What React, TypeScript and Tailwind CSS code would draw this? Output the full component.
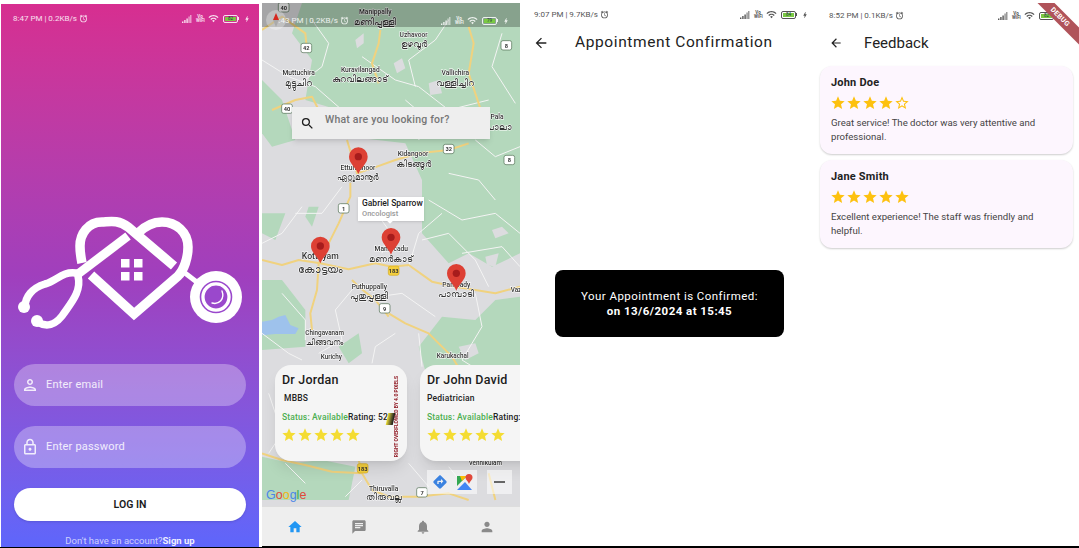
import { FC } from 'react';
import {
  MdArrowBack,
  MdBolt,
  MdChat,
  MdDirections,
  MdHome,
  MdNotifications,
  MdOutlineAlarm,
  MdOutlineLock,
  MdOutlinePerson,
  MdPerson,
  MdSearch,
  MdStar,
  MdStarBorder,
  MdWifi,
} from 'react-icons/md';

interface StatusBarProps {
  time: string;
  battery: string;
  light?: boolean;
  className?: string;
}

const StatusBar: FC<StatusBarProps> = ({ time, battery, light, className }) => {
  const tone = light ? 'text-white/85' : 'text-[#555]';
  return (
    <div className={`flex items-center justify-between text-[8px] leading-none font-['Roboto',sans-serif] ${tone} ${className}`}>
      <div className="flex items-center gap-[2px]">
        <span>{time}</span>
        <MdOutlineAlarm className="w-[9px] h-[9px]" />
      </div>
      <div className="flex items-center gap-[4px]">
        <svg width="10" height="8" viewBox="0 0 10 8" fill="currentColor">
          <path d="M0 8V6.5h1.4V8zM2.2 8V5h1.4v3zM4.4 8V3.5h1.4V8zM6.6 8V1.5h.9V8zM8.4 8V0h.9v8z" />
        </svg>
        <span className="text-[4.5px] leading-[4px] font-bold w-[8px] text-center">Vo WiFi</span>
        <MdWifi className="w-[11px] h-[11px]" />
        <div className="flex items-center">
          <div className="w-[15px] h-[8px] rounded-[2px] border border-current p-[1px] flex">
            <div className="w-full bg-[#7ac943] text-[4.5px] leading-[4px] text-center text-[#234]">{battery}</div>
          </div>
          <div className="w-[1px] h-[3px] bg-current" />
        </div>
        <MdBolt className="w-[8px] h-[8px]" />
      </div>
    </div>
  );
};

const Logo: FC = () => (
  <svg width="258" height="150" viewBox="1 190 258 150" fill="none" stroke="white" strokeLinecap="butt">
    <path strokeWidth="9.5" d="M174 266 L128 227 C118 219 108 222 102 222 C88 222 80 234 80 246 C80 253 81 258 82 263" />
    <path strokeWidth="9.5" d="M91 275 L134 314 L178 276 C184 270 188 258 188 247 C188 232 176 222 162 222 C152 222 144 227 138 233" />
    <path strokeWidth="9" d="M128 236 L78 274" />
    <path strokeWidth="7.5" strokeLinecap="round" d="M76 273 C62 271 57 281 45 284 C32 288 25 297 25 307" />
    <path strokeWidth="7.5" strokeLinecap="round" d="M78 276 C82 292 70 304 62 316 C54 326 46 327 37 322" />
    <circle cx="24" cy="307" r="6" fill="white" stroke="none" />
    <circle cx="37" cy="321" r="6" fill="white" stroke="none" />
    <path strokeWidth="5" d="M185 273 L198 283" />
    <circle cx="216" cy="297" r="26" fill="white" stroke="none" />
    <circle cx="216" cy="297" r="15.5" fill="none" stroke="#9a48cc" strokeWidth="1.6" />
    <circle cx="216" cy="297" r="12" fill="#9a48cc" stroke="white" strokeWidth="1.2" />
    <path strokeWidth="1.4" d="M222 291 C225 299 219 305 212 303" strokeLinecap="round" />
    <g fill="white" stroke="none">
      <rect x="121" y="259" width="8.5" height="8.5" />
      <rect x="134" y="259" width="8.5" height="8.5" />
      <rect x="121" y="272" width="8.5" height="8.5" />
      <rect x="134" y="272" width="8.5" height="8.5" />
    </g>
  </svg>
);

const LoginPanel: FC = () => (
  <div className="ml-px mt-1 w-[258px] h-[543px] flex flex-col items-center bg-gradient-to-b from-[#d72e90] via-[#a03fbd] to-[#5e66fb] font-['Roboto',sans-serif]">
    <StatusBar time="8:47 PM | 0.2KB/s" battery="82" light className="w-full pl-3 pr-2 pt-[9px]" />
    <div className="mt-[166px]">
      <Logo />
    </div>
    <div className="w-[232px] mt-[24px] flex flex-col">
      <div className="h-[42px] rounded-[21px] bg-white/30 flex items-center pl-[7px] text-white/85 text-[11px] tracking-[0.2px]">
        <MdOutlinePerson className="w-[18px] h-[18px]" />
        <span className="ml-[7px]">Enter email</span>
      </div>
      <div className="h-[42px] mt-[20px] rounded-[21px] bg-white/30 flex items-center pl-[7px] text-white/85 text-[11px] tracking-[0.2px]">
        <MdOutlineLock className="w-[18px] h-[18px]" />
        <span className="ml-[7px]">Enter password</span>
      </div>
      <div className="h-[33px] mt-[20px] rounded-[17px] bg-white shadow-sm flex items-center justify-center text-[#1b1b1b] text-[10.5px] font-semibold">
        LOG IN
      </div>
    </div>
    <div className="mt-[13px] text-[9.5px] text-white/70">
      Don't have an account?<span className="font-bold text-white/90">Sign up</span>
    </div>
  </div>
);

const roads = [
  'M0 780 L60 795 L110 780 L175 790 L260 808 L340 790 L390 800 L440 795 L510 845 L580 860 L700 880 L774 860',
  'M265 540 L265 590 L230 670 L200 730 L170 790 L165 870 L145 940 L150 990',
  'M380 940 L430 970 L500 1000 L570 1070 L600 1120',
  'M270 840 L290 860 L340 900 L380 950',
  'M0 90 L60 50 L130 100 L135 150',
  'M355 90 L350 130 L330 190 L350 250',
  'M620 80 L635 130 L620 220 L640 280 L660 340',
  'M30 330 L100 300 L150 290 L170 330',
  'M255 420 L270 470 L285 520 L330 505 L400 480 L470 460 L560 450 L620 430',
  'M0 1360 L60 1380 L130 1395 L210 1415 L300 1420 L330 1470 L380 1490 L470 1490 L560 1480 L620 1500',
  'M300 1420 L290 1380',
  'M680 1420 L700 1500',
];

const whiteRoads = [
  'M0 180 L80 230 L160 260 L240 330 L300 400',
  'M300 170 L400 240 L470 260 L560 330 L680 300',
  'M500 600 L600 660 L700 640 L774 700',
  'M480 720 L560 700 L640 780 L680 860',
  'M120 620 L60 700 L0 730',
  'M330 620 L380 690 L360 760',
  'M440 800 L470 700 L540 640',
  'M60 880 L130 960 L130 1020',
  'M270 870 L220 930 L240 1020 L170 1060',
  'M400 1000 L340 1040 L330 1090',
  'M470 1000 L480 1100',
  'M640 880 L660 980 L600 1080 L680 1130',
  'M20 1180 L60 1300 L20 1360',
  'M440 1390 L500 1460',
  'M560 60 L520 120 L440 180 L460 260',
  'M720 100 L690 200 L760 310',
  'M0 1000 L80 1060 L120 1080',
  'M150 60 L200 130 L180 200 L90 270',
  'M430 300 L500 360 L470 420',
  'M640 420 L700 470 L774 440',
  'M560 520 L650 540 L700 600',
  'M240 560 L180 640 L100 640',
  'M280 900 L420 880 L520 950',
  'M600 760 L720 740 L774 800',
  'M300 1440 L250 1490',
  'M560 1400 L600 1450',
  'M70 1390 L130 1450',
];

const greens = [
  'M120 9 L774 9 L774 760 L690 800 L620 760 L560 790 L480 700 L480 540 L430 430 L300 415 L230 330 L130 300 L150 180 L90 100 Z',
  'M0 240 L60 300 L100 420 L30 440 L0 400 Z',
  'M470 1040 L540 950 L640 960 L700 900 L774 890 L774 1150 L640 1130 L600 1180 L500 1150 Z',
  'M0 840 L60 840 L130 930 L130 1040 L0 1050 Z',
  'M140 620 L170 620 L150 680 L130 650 Z',
  'M0 1370 L90 1390 L180 1380 L280 1400 L260 1500 L0 1500 Z',
  'M0 640 L70 640 L40 720 L0 700 Z',
  'M230 1040 L290 1000 L300 1060 L260 1090 Z',
];

const grayPatches = [
  'M280 120 L305 100 L305 130 L285 145 Z',
  'M395 190 L420 175 L430 205 L405 220 Z',
  'M690 690 L720 680 L740 700 L700 715 Z',
  'M670 770 L710 760 L700 800 L675 795 Z',
  'M500 250 L530 240 L540 280 L505 285 Z',
  'M590 1040 L640 1030 L650 1060 L610 1080 Z',
];

const shields: [number, number, string, boolean][] = [
  [65, 22, '40', false],
  [75, 326, '40', false],
  [133, 144, '42', false],
  [733, 136, '8', false],
  [742, 480, '8', false],
  [560, 447, '32', false],
  [245, 625, '1', false],
  [395, 812, '183', true],
  [368, 925, '9', false],
  [302, 1405, '183', true],
  [480, 1477, '7', false],
];

const labels: [number, number, string, number?][] = [
  [340, 42, 'Manippally', 20],
  [340, 74, 'മണിപ്പള്ളി', 27],
  [455, 110, 'Uzhavoor', 20],
  [455, 140, 'ഉഴവൂർ', 26],
  [110, 226, 'Muttuchira', 20],
  [110, 258, 'മുട്ടുചിറ', 26],
  [295, 216, 'Kuravilangad', 20],
  [295, 246, 'കുറവിലങ്ങാട്', 26],
  [580, 225, 'Vallichira', 20],
  [580, 257, 'വള്ളിച്ചിറ', 26],
  [705, 358, 'Pala', 20],
  [710, 390, 'പാലാ', 26],
  [453, 468, 'Kidangoor', 20],
  [455, 500, 'കിടങ്ങൂർ', 26],
  [288, 510, 'Ettumanoor', 20],
  [288, 540, 'ഏറ്റുമാനൂർ', 23],
  [175, 778, 'Kottayam', 26],
  [175, 818, 'കോട്ടയം', 32],
  [388, 753, 'Manarcadu', 20],
  [388, 786, 'മണർകാട്', 27],
  [322, 866, 'Puthuppally', 20],
  [322, 898, 'പുതുപ്പള്ളി', 26],
  [583, 860, 'Pampady', 20],
  [583, 890, 'പാമ്പാടി', 26],
  [188, 1006, 'Chingavanam', 19],
  [188, 1036, 'ചിങ്ങവനം', 24],
  [208, 1076, 'Kurichy', 19],
  [572, 1075, 'Karukachal', 19],
  [365, 1472, 'Thiruvalla', 20],
  [365, 1500, 'തിരുവല്ല', 26],
  [670, 1394, 'Vennikulam', 19],
  [762, 875, 'Vaz', 19],
];

const markers: [number, number][] = [
  [289, 470],
  [175, 738],
  [387, 712],
  [583, 820],
];

const MapCanvas: FC = () => (
  <svg className="absolute inset-0 w-full h-full blur-[0.4px]" viewBox="0 9 774 1509" preserveAspectRatio="none">
    <rect x="0" y="9" width="774" height="1509" fill="#dcdcdf" />
    {greens.map((d) => (
      <path key={d} d={d} fill="#b4d8bc" />
    ))}
    {grayPatches.map((d) => (
      <path key={d} d={d} fill="#dcdcdf" />
    ))}
    <path d="M0 965 L30 960 L50 950 L70 945 L85 975 L110 985 L100 1002 L40 1002 L0 1006 Z" fill="#9ec2ec" />
    {whiteRoads.map((d) => (
      <path key={d} d={d} fill="none" stroke="#f4f4f4" strokeWidth="3" strokeLinejoin="round" />
    ))}
    {roads.map((d) => (
      <path key={d} d={d} fill="none" stroke="#f0d27f" strokeWidth="6" strokeLinejoin="round" />
    ))}
    {shields.map(([x, y, text, yellow]) => (
      <g key={`${x}-${y}`}>
        <rect x={x - 16} y={y - 14} width="32" height="28" rx="6" fill={yellow ? '#f4cf3e' : '#fff'} stroke={yellow ? '#d4aa20' : '#4c6b4f'} strokeWidth="2" />
        <text x={x} y={y + 7} textAnchor="middle" fontSize="17" fontWeight="700" fill="#333" fontFamily="Roboto, sans-serif">
          {text}
        </text>
      </g>
    ))}
    {labels.map(([x, y, text, size]) => (
      <text
        key={text}
        x={x}
        y={y}
        textAnchor="middle"
        fontSize={size ?? 20}
        fontWeight="500"
        fill="#333"
        stroke="#fff"
        strokeWidth="3"
        paintOrder="stroke"
        fontFamily="Roboto, 'Noto Sans', sans-serif"
      >
        {text}
      </text>
    ))}
    {markers.map(([x, y]) => (
      <g key={`${x}-${y}`}>
        <path d={`M${x} ${y + 52} C${x - 6} ${y + 34} ${x - 28} ${y + 20} ${x - 28} ${y} A28 28 0 1 1 ${x + 28} ${y} C${x + 28} ${y + 20} ${x + 6} ${y + 34} ${x} ${y + 52} Z`} fill="#dd4034" />
        <circle cx={x} cy={y} r="11" fill="#a71c1c" />
      </g>
    ))}
  </svg>
);

const Stars: FC<{ filled: number; size: string; color: string }> = ({ filled, size, color }) => (
  <div className={`flex ${color}`}>
    {[0, 1, 2, 3, 4].map((i) =>
      i < filled ? <MdStar key={i} className={size} /> : <MdStarBorder key={i} className={size} />
    )}
  </div>
);

const DoctorCard: FC<{ name: string; degree: string; indent?: boolean; left: string; overflowed?: boolean }> = ({
  name,
  degree,
  indent,
  left,
  overflowed,
}) => (
  <div className={`absolute top-[362px] ${left} w-[132px] h-[96px] rounded-[16px] bg-[#f5f5f5] shadow-lg pl-[7px] pt-[7px] overflow-hidden whitespace-nowrap`}>
    <div className="text-[12.5px] leading-[16px] font-medium text-[#1c1c1c] tracking-[0.2px]">{name}</div>
    <div className={`mt-[4px] text-[8.5px] leading-[12px] font-medium text-[#222] tracking-[0.2px] ${indent ? 'ml-[2px]' : ''}`}>{degree}</div>
    <div className="mt-[7px] text-[8.5px] leading-[12px] font-medium tracking-[0.15px] text-[#222]">
      <span className="text-[#4caf50]">Status: Available</span>Rating: 52{overflowed ? '.3' : ''}
    </div>
    <div className="mt-[4px] -ml-[1px]">
      <Stars filled={5} size="w-[16px] h-[16px]" color="text-[#f4dc32]" />
    </div>
    {overflowed && (
      <>
        <div className="absolute right-[8px] top-[12px] h-[80px] w-[6px] flex items-center justify-center bg-[#f5f5f5]">
          <span className="[writing-mode:vertical-rl] rotate-180 text-[5px] leading-[6px] font-bold text-[#8f1620]">
            RIGHT OVERFLOWED BY 4.0 PIXELS
          </span>
        </div>
        <div className="absolute left-[112px] top-[48px] w-[7px] h-[12px] -skew-x-12 bg-gradient-to-r from-[#f1e12f] to-[#161616]" />
      </>
    )}
  </div>
);

const MapPanel: FC = () => (
  <div className="ml-[3px] mt-[3px] w-[258px] h-[543px] flex flex-col font-['Roboto',sans-serif]">
    <div className="relative h-[503px] overflow-hidden">
      <MapCanvas />
      <div className="absolute inset-x-0 top-0 h-[24px] bg-black/25">
        <StatusBar time="3:43 PM | 0.2KB/s" battery="79" light className="pl-[12px] pr-[10px] pt-[11px] h-[24px]" />
      </div>
      <div className="absolute left-[4px] top-[7px] w-[20px] h-[20px] rounded-full bg-white/30 flex items-center justify-center">
        <svg width="6" height="14" viewBox="0 0 6 14">
          <path d="M3 0 L6 7 H0 Z" fill="#d5271f" />
          <path d="M3 14 L0 7 H6 Z" fill="#aaa" />
        </svg>
      </div>
      <div className="absolute left-[30px] top-[104px] w-[198px] h-[32px] bg-[#eeeeee] shadow-md flex pl-[8px] text-[#767676]">
        <MdSearch className="w-[15px] h-[15px] mt-[9px] text-[#1b1b1b]" />
        <span className="ml-[10px] mt-[6px] text-[10.5px] leading-[13px] font-medium tracking-[0.2px]">What are you looking for?</span>
      </div>
      <div className="absolute left-[96px] top-[194px] w-[66px] h-[24px] bg-white pl-[4px] pt-[1px] shadow-sm">
        <div className="text-[8.5px] leading-[11px] font-medium text-[#222]">Gabriel Sparrow</div>
        <div className="text-[7.5px] leading-[10px] font-medium text-[#999]">Oncologist</div>
        <div className="absolute left-[30px] -bottom-[2px] w-[4px] h-[4px] rotate-45 bg-white" />
      </div>
      <DoctorCard name="Dr Jordan" degree="MBBS" indent left="left-[13px]" overflowed />
      <DoctorCard name="Dr John David" degree="Pediatrician" left="left-[158px]" />
      <div className="absolute left-[165px] top-[467px] w-[50px] h-[24px] bg-white/55 flex items-center justify-around">
        <MdDirections className="w-[16px] h-[16px] text-[#3b82e0]" />
        <svg width="16" height="16" viewBox="0 0 16 16">
          <path d="M0 2 H10 L0 12 Z" fill="#34a853" />
          <path d="M0 16 L8 8 L15 16 Z" fill="#4285f4" />
          <path d="M3 2 H10 L5 7 Z" fill="#fbbc04" />
          <path d="M12 0 A3.5 3.5 0 0 1 15.5 3.5 C15.5 6 13 7 12 10 C11 7 8.5 6 8.5 3.5 A3.5 3.5 0 0 1 12 0 Z" fill="#e0483a" />
        </svg>
      </div>
      <div className="absolute left-[225px] top-[467px] w-[25px] h-[24px] bg-white/55 flex items-center justify-center">
        <div className="w-[11px] h-[2px] bg-[#666]" />
      </div>
      <div className="absolute left-[4px] top-[485px] text-[12.5px] leading-[14px] font-['Liberation_Sans',sans-serif]">
        <span className="text-[#4a86e8]">G</span>
        <span className="text-[#e0483a]">o</span>
        <span className="text-[#f2b50f]">o</span>
        <span className="text-[#4a86e8]">g</span>
        <span className="text-[#34a853]">l</span>
        <span className="text-[#e0483a]">e</span>
      </div>
    </div>
    <div className="h-[40px] bg-[#eeeeee] border-t border-[#dddddd] flex items-center justify-around px-[1px]">
      <MdHome className="w-[16px] h-[16px] text-[#2196f3]" />
      <MdChat className="w-[16px] h-[16px] text-[#8a8a8a]" />
      <MdNotifications className="w-[16px] h-[16px] text-[#8a8a8a]" />
      <MdPerson className="w-[16px] h-[16px] text-[#8a8a8a]" />
    </div>
  </div>
);

const ConfirmPanel: FC = () => (
  <div className="w-[297px] mt-[3px] h-[543px] bg-white flex flex-col font-['Roboto',sans-serif]">
    <StatusBar time="9:07 PM | 9.7KB/s" battery="84" className="pl-[14px] pr-[8px] pt-[6px]" />
    <div className="flex items-center mt-[11px] pl-[13px] h-[24px] text-[#222]">
      <MdArrowBack className="w-[16px] h-[16px]" />
      <span className="ml-[26px] text-[15.5px] tracking-[0.6px]">Appointment Confirmation</span>
    </div>
    <div className="ml-[35px] mt-[215px] w-[229px] h-[67px] rounded-[8px] bg-black flex flex-col items-center justify-center text-white text-[11.5px] leading-[15px] tracking-[0.45px]">
      <span>Your Appointment is Confirmed:</span>
      <span className="font-bold">on 13/6/2024 at 15:45</span>
    </div>
  </div>
);

const FeedbackCard: FC<{ name: string; filled: number; lines: string[] }> = ({ name, filled, lines }) => (
  <div className="rounded-[12px] bg-[#fdf6fe] shadow-[0_1px_2px_rgba(0,0,0,0.2)] pl-[11px] pr-[8px] pt-[10px] h-[88px]">
    <div className="text-[11px] leading-[13px] font-bold text-[#222] tracking-[0.2px]">{name}</div>
    <div className="mt-[6px] -ml-[1px]">
      <Stars filled={filled} size="w-[16px] h-[16px]" color="text-[#fdc10f]" />
    </div>
    <div className="mt-[5px] text-[#444] text-[9.6px] leading-[13.5px]">
      {lines.map((line) => (
        <div key={line}>{line}</div>
      ))}
    </div>
  </div>
);

const FeedbackPanel: FC = () => (
  <div className="relative w-[262px] mt-[3px] h-[543px] bg-white overflow-hidden flex flex-col font-['Roboto',sans-serif]">
    <StatusBar time="8:52 PM | 0.1KB/s" battery="82" className="pl-[12px] pr-[12px] pt-[7px]" />
    <div className="flex items-center mt-[10px] pl-[12px] h-[24px] text-[#222]">
      <MdArrowBack className="w-[14px] h-[14px]" />
      <span className="ml-[21px] text-[15px]">Feedback</span>
    </div>
    <div className="mt-[11px] ml-[3px] w-[253px] flex flex-col gap-[6px]">
      <FeedbackCard
        name="John Doe"
        filled={4}
        lines={['Great service! The doctor was very attentive and', 'professional.']}
      />
      <FeedbackCard
        name="Jane Smith"
        filled={5}
        lines={['Excellent experience! The staff was friendly and', 'helpful.']}
      />
    </div>
    <div className="absolute -right-[16px] top-[8px] w-[70px] h-[12px] rotate-45 bg-[#b0535a] text-white text-[7px] leading-[12px] font-bold text-center tracking-[0.3px]">
      DEBUG
    </div>
  </div>
);

export default function App() {
  return (
    <div className="w-[1079px] h-[548px] bg-white overflow-hidden relative flex">
      <LoginPanel />
      <MapPanel />
      <ConfirmPanel />
      <FeedbackPanel />
      <div className="absolute left-0 bottom-0 w-full h-px bg-black" />
      <div className="absolute left-[262px] bottom-0 w-[817px] h-[2px] bg-black" />
    </div>
  );
}
